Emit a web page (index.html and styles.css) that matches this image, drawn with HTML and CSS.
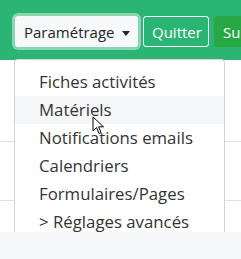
FILE: index.html
```html
<!DOCTYPE html>
<html>
<head>
  <title>Paramétrage</title>
  <link rel="stylesheet" href="styles.css">
</head>
<body>
  <header class="topbar">
    <div class="dropdown">
      <button class="btn btn-light">Paramétrage <span class="caret"></span></button>
      <div class="dropdown-menu">
        <a class="dropdown-item" href="#">Fiches activités</a>
        <a class="dropdown-item active" href="#">Matériels
          <svg class="cursor" width="13" height="19" viewBox="0 0 13 19">
            <path d="M1 1 L1 15 L4.5 11.5 L7 17.5 L9 16.6 L6.6 10.8 L11.5 10.8 Z" fill="#fff" stroke="#000" stroke-width="1"/>
          </svg>
        </a>
        <a class="dropdown-item" href="#">Notifications emails</a>
        <a class="dropdown-item" href="#">Calendriers</a>
        <a class="dropdown-item" href="#">Formulaires/Pages</a>
        <a class="dropdown-item" href="#">&gt; Réglages avancés</a>
      </div>
    </div>
    <button class="btn btn-outline">Quitter</button>
    <button class="btn btn-success">Su</button>
  </header>

  <main class="content">
    <div class="row"></div>
    <div class="row"></div>
    <div class="row"></div>
  </main>
  <div class="footer"></div>
</body>
</html>
```

FILE: styles.css
```css
body {
  margin: 0;
  font-family: "Open Sans", Arial, sans-serif;
  background-color: #f5f6f8;
  overflow: hidden;
}
.topbar {
  display: flex;
  gap: 5px;
  height: 60px;
  padding: 16px 0 0 15px;
  box-sizing: border-box;
  background-color: #2bb574;
  white-space: nowrap;
}
.dropdown {
  position: relative;
}
.btn {
  height: 31px;
  padding: 0 8px;
  font-family: inherit;
  font-size: 15px;
  border: 1px solid transparent;
  border-radius: 3px;
  cursor: pointer;
}
.btn-light {
  width: 123px;
  background-color: #f8f9fa;
  color: #212529;
  box-shadow: 0 0 0 3px rgba(255, 255, 255, 0.45);
  text-align: left;
}
.caret {
  display: inline-block;
  margin-left: 4px;
  vertical-align: 2px;
  border-top: 5px solid #212529;
  border-left: 4px solid transparent;
  border-right: 4px solid transparent;
}
.btn-outline {
  width: 66px;
  background: transparent;
  color: #fff;
  border-color: #fff;
}
.btn-success {
  width: 40px;
  background-color: #28a745;
  color: #fff;
  text-align: left;
  border-radius: 3px 0 0 3px;
}
.dropdown-menu {
  position: absolute;
  top: 43px;
  left: -1px;
  z-index: 10;
  width: 211px;
  padding: 8px 0;
  background-color: #fff;
  border: 1px solid rgba(0, 0, 0, 0.17);
  border-radius: 4px;
  box-sizing: border-box;
}
.dropdown-item {
  position: relative;
  display: block;
  height: 28px;
  line-height: 28px;
  padding: 0 24px;
  font-size: 16.8px;
  color: #333;
  text-decoration: none;
}
.dropdown-item.active {
  background-color: #f5f6f8;
}
.cursor {
  position: absolute;
  left: 77px;
  top: 20px;
}
.content {
  background-color: #fff;
  height: 172px;
}
.row {
  height: 81px;
  border-bottom: 1px solid #dee2e6;
}
.row + .row {
  height: 58px;
}
```
